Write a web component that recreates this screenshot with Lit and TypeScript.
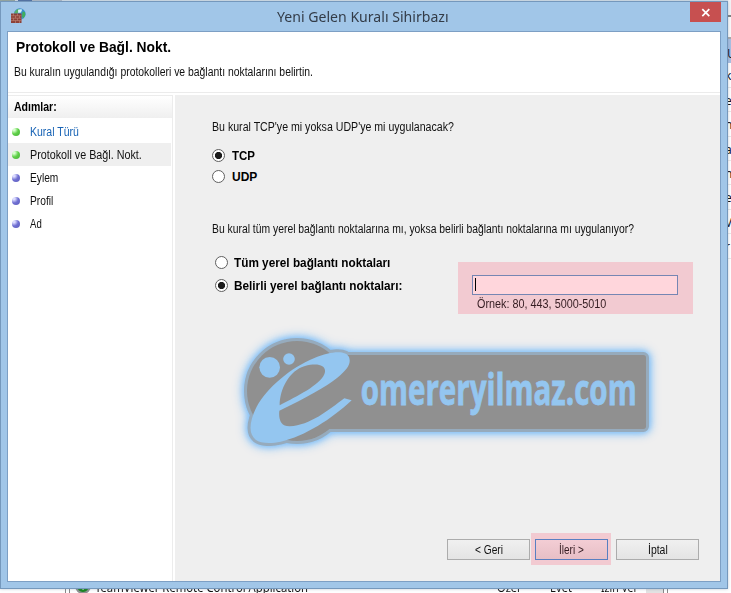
import { LitElement, html, css, svg } from "lit";
import { customElement, property, query } from "lit/decorators.js";

/** A single line of text condensed or stretched horizontally to a set width. */
@customElement("fit-text")
class FitText extends LitElement {
  @property() text = "";
  @property({ type: Number }) w = 100;
  @query("span") span!: HTMLSpanElement;
  static styles = css`
    :host { display: block; white-space: pre; flex: none; }
    span { display: inline-block; transform-origin: 0 50%; }
  `;
  updated() {
    this.style.width = this.w + "px";
    this.span.style.transform = `scaleX(${this.w / this.span.offsetWidth})`;
  }
  render() {
    return html`<span>${this.text}</span>`;
  }
}

@customElement("firewall-icon")
class FirewallIcon extends LitElement {
  static styles = css`:host, svg { display: block; }`;
  render() {
    return html`<svg width="17" height="16" viewBox="0 0 17 16">
      <circle cx="9.8" cy="6" r="5.8" fill="#3a8fd0" />
      <path d="M4.500 4Q7 .5 9.500 .8L9 3.6 7.5 5.500H4.500z" fill="#55b06a" />
      <path d="M12.500 3.5l2.500 .5.4 3-2 3.500-1.400-2z" fill="#3fae5e" />
      <path d="M8 1.800q2.200-1.200 4.200-.2l-1.200 3-2.800.4z" fill="#d5f1f5" />
      <rect x="1" y="5.500" width="10.500" height="9.500" fill="#8c4036" />
      <path d="M1 7.800h10.500M1 10.200h10.500M1 12.600h10.500M3.5 5.500v2.300M7.5 5.500v2.300M5.500 7.800v2.400M9.5 7.800v2.400M3.5 10.200v2.400M7.5 10.200v2.400M5.5 12.600V15M9.5 12.600V15" stroke="#c28a79" stroke-width=".6" />
    </svg>`;
  }
}

@customElement("site-logo")
class SiteLogo extends LitElement {
  static styles = css`
    :host, svg { display: block; }
    svg { overflow: visible; }
    .plate { filter: drop-shadow(0 0 9px #7fbff8) drop-shadow(0 0 15px #80bef6); }
    .edge { fill: #96abbd; stroke: #96abbd; stroke-width: 18; stroke-linejoin: round; }
    .fill { fill: #909090; }
    .blue { fill: #94c6f0; }
    .name { font: bold 130px "Open Sans", sans-serif; stroke: #94c6f0; stroke-width: 2.5; }
  `;
  render() {
    const outer =
      "M365 226L343 220C295 256 240 301 180 304C154 305 145 286 148 257C228 218 288 185 322 158C354 132 364 115 357 96C348 74 300 79 255 98C180 128 110 190 80 245C57 292 55 326 77 344C91 355 122 356 152 350C225 334 305 282 365 226Z";
    const hole = "M149 241C149 193 177 137 225 123C267 112 293 123 283 148C270 180 201 214 149 241Z";
    const shapes = svg`<circle cx="201" cy="198" r="150" /><rect x="201" y="90" width="1047" height="222" rx="8" />`;
    return html`<svg width="440" height="135" viewBox="0 0 1320 405">
      <g class="plate"><g class="edge">${shapes}<path d=${outer} /></g></g>
      <g class="fill">${shapes}</g>
      <g class="blue">
        <path fill-rule="evenodd" d=${outer + hole} />
        <circle cx="119" cy="127" r="31" />
        <circle cx="177" cy="102" r="17.5" />
        <text class="name" x="392" y="241" textLength="828" lengthAdjust="spacingAndGlyphs">omereryilmaz.com</text>
      </g>
    </svg>`;
  }
}

@customElement("app-root")
class AppRoot extends LitElement {
  static styles = css`
    :host {
      display: block; position: relative; width: 731px; height: 593px; overflow: hidden;
      background: #fff; color: #101010; font: 12px/15px "Liberation Sans", sans-serif;
    }
    * { box-sizing: border-box; }
    .top { position: absolute; inset: 0 0 auto 0; height: 2px; background: linear-gradient(90deg, #9cab9f 0 15px, #dbe3ea 15px 18px, #5272a3 18px 32px, #b5bfc9 32px 62px, #dbe5ec 62px); }
    .behind { position: absolute; left: 728px; top: 0; width: 3px; height: 260px; overflow: hidden; display: flex; flex-direction: column; font: 12px/25px "Noto Sans", sans-serif; }
    .bar { flex: none; height: 39px; background: linear-gradient(#f3f3f5 0 15px, #808080 15px 17px, #fafafa 17px 37px, #aaa 37px); }
    .cell { flex: none; height: 24.4px; border-bottom: 1px solid #e8e8e8; text-indent: -3px; }
    .cell.head { background: #a8bfe2; border: 0; text-indent: -1px; line-height: 30px; }
    .list { position: absolute; left: 65px; top: 579px; height: 14px; width: 666px; overflow: hidden; display: flex; font: 12.5px/17px "Noto Sans", sans-serif; }
    .rule { width: 5px; border: solid #888; border-width: 0 1px; flex: none; }
    .check { width: 16px; height: 16px; margin: -1px 4px 0 5px; border-radius: 50%; border: 2px solid #8d9290; background: #16851c; display: block; flex: none; }
    .check path { fill: none; stroke: #fff; stroke-width: 2; }
    .c1 { margin-right: 189px; } .c2 { margin-right: 30px; } .c3 { margin-right: 29px; } .c4 { margin-right: 8px; }
    .thumb { width: 17px; background: #e3e3e3; margin-right: 0; }
    .window { position: absolute; left: 0; top: 1px; width: 728px; height: 588px; border: 1px solid #7598bc; background: #a1c6e8; padding: 0 6px 6px; display: flex; flex-direction: column; box-shadow: 0 0 3px #5f7a9966; }
    .title { height: 29px; flex: none; display: flex; align-items: flex-start; color: #333c48; font: 14.5px/28px "Noto Sans", sans-serif; }
    .title firewall-icon { margin: 6px 0 0 3px; }
    .title .name { margin: 0 241px 0 250px; }
    .close { width: 31px; height: 20px; background: #c75050; display: block; flex: none; }
    .frame { flex: 1; border: 1px solid #7d9fc4; background: #fff; display: flex; flex-direction: column; min-height: 0; }
    .intro { height: 61px; flex: none; border-bottom: 1px solid #ebebeb; padding: 7px 0 0 6px; }
    .intro h1 { margin: 0 0 9px 2px; font: bold 14px/17px "Liberation Sans", sans-serif; color: #000; }
    .main { flex: 1; display: flex; margin-top: 2px; min-height: 0; }
    .steps { width: 165px; border-right: 1px solid #ececec; flex: none; }
    .caption { height: 23px; border-top: 1px solid #ececec; background: linear-gradient(#fff, #efefef); padding: 4px 0 0 6px; font-weight: bold; margin-bottom: 2px; color: #000; }
    .step { height: 23px; width: 163px; display: flex; align-items: center; padding: 2px 0 0 4px; gap: 10px; }
    .step.now { background: #efefef; }
    .step.done { color: #1763b5; }
    .dot { width: 8px; height: 8px; margin-bottom: 1px; border-radius: 50%; background: radial-gradient(circle at 25% 22%, #dcdcff 0 12%, #7070d2 48%, #5c5cbd); }
    .dot.green { background: radial-gradient(circle at 25% 22%, #d6ffcc 0 12%, #5fd048 48%, #49b03a); }
    .page { flex: 1; margin-left: 2px; background: #efefef; display: flex; flex-direction: column; padding: 25px 0 0 37px; }
    .radio { display: flex; align-items: center; gap: 7px; height: 21px; font-weight: bold; color: #000; }
    .radio i { width: 13px; height: 13px; border: 1px solid #606060; border-radius: 50%; background: #fff; }
    .radio i.on { background: radial-gradient(circle, #1c1c1c 0 3.2px, #fff 4px); }
    .radio fit-text { margin-top: 2px; }
    .proto { margin: 10px 0 35px; }
    .ports { display: flex; margin: 25px 0 0 3px; height: 52px; }
    .ports .radio { height: 23px; gap: 6px; }
    .options { width: 243px; margin-top: -11px; }
    .hint { width: 235px; height: 52px; background: #f2cad1; padding: 13px 14px 0; color: #351d22; }
    .input { height: 20px; width: 206px; border: 1px solid #7686b3; background: #ffd6dc; padding: 2px; margin-bottom: 2px; }
    .caret { width: 1px; height: 13px; background: #000; }
    .hint fit-text { margin-left: 5px; }
    site-logo { margin: 11px 0 0 18px; height: 135px; }
    .buttons { display: flex; margin: 73px 0 0 235px; align-items: center; height: 32px; }
    .btn { width: 83px; height: 21px; border: 1px solid #acacac; background: linear-gradient(#f0f0f0, #e4e4e4); display: flex; justify-content: center; align-items: center; padding-top: 2px; }
    .mark { background: #f2cad1; width: 80px; height: 32px; margin: 0 5px 0 1px; display: flex; align-items: center; justify-content: center; }
    .mark .btn { width: 73px; border-color: #597fc1; background: linear-gradient(#f3cdd4, #e7bfc6) padding-box; color: #351d22; }
  `;

  render() {
    const steps: [string, number, string, boolean][] = [
      ["Kural Türü", 49, "done", true],
      ["Protokoll ve Bağl. Nokt.", 112, "now", true],
      ["Eylem", 28, "", false],
      ["Profil", 23, "", false],
      ["Ad", 12, "", false],
    ];
    const radio = (text: string, w: number, on: boolean) =>
      html`<div class="radio"><i class=${on ? "on" : ""}></i><fit-text text=${text} w=${w}></fit-text></div>`;
    return html`
      <div class="top"></div>
      <div class="behind">
        <div class="bar"></div>
        <div class="cell head">U</div>
        ${["k", "e", "n", "a", "n", "e", "V", "r"].map((c) => html`<div class="cell">${c}</div>`)}
      </div>
      <div class="list">
        <div class="rule"></div>
        <svg class="check" viewBox="0 0 12 12"><path d="M3 5.5l3 3 4-6" /></svg>
        <fit-text class="c1" text="TeamViewer Remote Control Application" w="213"></fit-text>
        <fit-text class="c2" text="Özel" w="23"></fit-text>
        <fit-text class="c3" text="Evet" w="22"></fit-text>
        <fit-text class="c4" text="İzin Ver" w="37"></fit-text>
        <div class="thumb"></div>
        <div class="rule"></div>
      </div>
      <div class="window">
        <div class="title">
          <firewall-icon></firewall-icon>
          <fit-text class="name" text="Yeni Gelen Kuralı Sihirbazı" w="172"></fit-text>
          <svg class="close" viewBox="0 0 31 20"><path d="M12.3 7.2l7 7M19.3 7.2l-7 7" stroke="#fff" stroke-width="1.7" /></svg>
        </div>
        <div class="frame">
          <div class="intro">
            <h1><fit-text text="Protokoll ve Bağl. Nokt." w="155"></fit-text></h1>
            <fit-text text="Bu kuralın uygulandığı protokolleri ve bağlantı noktalarını belirtin." w="299"></fit-text>
          </div>
          <div class="main">
            <div class="steps">
              <div class="caption"><fit-text text="Adımlar:" w="43"></fit-text></div>
              ${steps.map(
                ([text, w, state, green]) => html`<div class="step ${state}">
                  <div class="dot ${green ? "green" : ""}"></div>
                  <fit-text text=${text} w=${w}></fit-text>
                </div>`
              )}
            </div>
            <div class="page">
              <fit-text text="Bu kural TCP'ye mi yoksa UDP'ye mi uygulanacak?" w="242"></fit-text>
              <div class="proto">${radio("TCP", 23, true)}${radio("UDP", 25, false)}</div>
              <fit-text text="Bu kural tüm yerel bağlantı noktalarına mı, yoksa belirli bağlantı noktalarına mı uygulanıyor?" w="422"></fit-text>
              <div class="ports">
                <div class="options">
                  ${radio("Tüm yerel bağlantı noktaları", 156, false)}
                  ${radio("Belirli yerel bağlantı noktaları:", 168, true)}
                </div>
                <div class="hint">
                  <div class="input"><div class="caret"></div></div>
                  <fit-text text="Örnek: 80, 443, 5000-5010" w="129"></fit-text>
                </div>
              </div>
              <site-logo></site-logo>
              <div class="buttons">
                <div class="btn"><fit-text text="< Geri" w="28"></fit-text></div>
                <div class="mark"><div class="btn"><fit-text text="İleri >" w="25"></fit-text></div></div>
                <div class="btn"><fit-text text="İptal" w="20"></fit-text></div>
              </div>
            </div>
          </div>
        </div>
      </div>
    `;
  }
}
